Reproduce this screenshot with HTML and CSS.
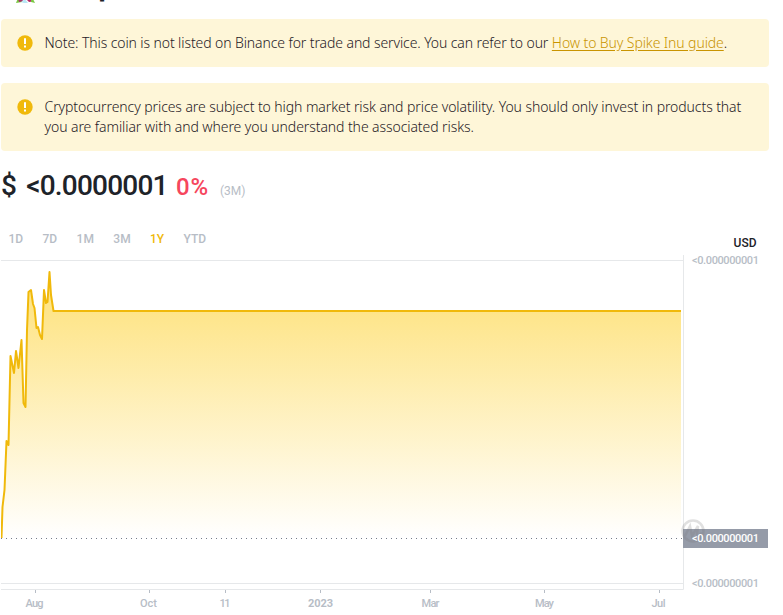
FILE: index.html
```html
<!DOCTYPE html>
<html lang="en">
<head>
<meta charset="utf-8">
<title>Spike Inu price</title>
<link rel="stylesheet" href="styles.css">
</head>
<body>
<main class="page">
  <header class="coin">
    <svg class="coin-logo" width="20" height="24" viewBox="0 0 20 24">
      <path d="M0 24L2 19H6V23Z" fill="#79c843"/>
      <path d="M2 20H8L6 22.500L3 23Z" fill="#a83268"/>
      <path d="M5 23L9 20L12 24H8Z" fill="#b9e6f5"/>
      <path d="M10 20H16L17 22.500L13 23Z" fill="#b52c69"/>
      <path d="M15 20H17L19 24L15 23Z" fill="#79c843"/>
    </svg>
    <h1 class="coin-name">Spike Inu</h1>
  </header>
  <section class="notice">
    <svg class="notice-icon" width="16" height="16" viewBox="0 0 16 16"><circle cx="8" cy="8" r="7.7" fill="#f0b90b"/><path d="M7 3.2H9V9H7ZM7 10.5H9V12.5H7Z" fill="#fff"/></svg>
    <p class="notice-text"><span class="listing">Note: This coin is not listed on Binance for trade and service. You can refer to our <a class="guide" href="#">How to Buy Spike Inu guide</a>.</span></p>
  </section>
  <section class="notice">
    <svg class="notice-icon" width="16" height="16" viewBox="0 0 16 16"><circle cx="8" cy="8" r="7.7" fill="#f0b90b"/><path d="M7 3.2H9V9H7ZM7 10.5H9V12.5H7Z" fill="#fff"/></svg>
    <p class="notice-text">Cryptocurrency prices are subject to high market risk and price volatility. You should only invest in products that<br>you are familiar with and where you understand the associated risks.</p>
  </section>
  <div class="quote">
    <span class="price">$ &lt;0.0000001</span>
    <span class="change">0%</span>
    <span class="period">(3M)</span>
  </div>
  <div class="toolbar">
    <nav class="ranges">
      <span>1D</span><span>7D</span><span>1M</span><span>3M</span><span class="active">1Y</span><span>YTD</span>
    </nav>
    <span class="currency">USD</span>
  </div>
  <svg class="chart" width="782" height="361" viewBox="1 254 782 361">
    <defs><linearGradient id="area" x1="0" y1="311" x2="0" y2="538" gradientUnits="userSpaceOnUse"><stop offset="0" stop-color="#fee58a"/><stop offset="1" stop-color="#fff"/></linearGradient></defs>
    <path class="grid" d="M1 260.5H683M1 583.5H683M1 589.5H683.5V255"/>
    <path fill="url(#area)" d="M1 538L2.500 507L4.500 490L6.500 441L8.500 445L10.500 356L14 373L16 351L18.500 368L21.500 340L23.500 403L25.500 407L27 330L28.500 292L31 290L33 304L34.500 308L36.500 328L38 327L40 335L42 339L44 290L46 303L47.500 302L49.500 272L51 295L53.500 311H681V538Z"/>
    <path class="line" d="M1.500 538L2.500 507L4.500 490L6.500 441L8.500 445L10.500 356L14 373L16 351L18.500 368L21.500 340L23.500 403L25.500 407L27 330L28.500 292L31 290L33 304L34.500 308L36.500 328L38 327L40 335L42 339L44 290L46 303L47.500 302L49.500 272L51 295L53.500 311H681"/>
    <path class="baseline" d="M1 538.5H683"/>
    <path class="ticks" d="M35.500 590V593M149.500 590V593M225.500 590V593M320.500 590V593M430.500 590V593M544.500 590V593M659.500 590V593"/>
    <rect x="683" y="529" width="85" height="19" fill="#959ba8"/>
    <g class="mark"><circle cx="693" cy="531" r="10.500"/><path d="M685 536L690 526L692 536L698 526L697 534Q698 537 702 533"/></g>
    <g class="scale">
      <text x="692" y="264" textLength="67">&lt;0.000000001</text>
      <text class="current" x="692" y="542" textLength="67">&lt;0.000000001</text>
      <text x="692" y="587" textLength="67">&lt;0.000000001</text>
    </g>
    <g class="dates">
      <text x="34.500" y="607" textLength="18">Aug</text>
      <text x="148.500" y="607" textLength="17">Oct</text>
      <text x="225" y="607" textLength="11">11</text>
      <text class="year" x="320.500" y="607" textLength="25">2023</text>
      <text x="430.500" y="607" textLength="18">Mar</text>
      <text x="544.500" y="607" textLength="19">May</text>
      <text x="658.500" y="607" textLength="14">Jul</text>
    </g>
  </svg>
</main>
</body>
</html>
```
FILE: styles.css
```css
* { box-sizing: border-box; }
body { margin: 0; background: #fff; color: #1e2329; font-family: Roboto, "Liberation Sans", sans-serif; overflow: hidden; }
h1, p { margin: 0; }
.page { width: 783px; height: 615px; padding-left: 1px; overflow: hidden; }
.coin { height: 19px; display: flex; align-items: flex-start; gap: 8px; padding-left: 15px; overflow: hidden; }
.coin-logo { flex: none; margin-top: -21px; }
.coin-name { font: 700 28px/32px Inter, sans-serif; margin-top: -30px; margin-left: 36px; white-space: nowrap; }
.notice { width: 768px; display: flex; gap: 12px; padding: 14px 16px; margin-bottom: 16px; background: #fef6d8; border-radius: 4px; }
.notice-icon { flex: none; margin-top: 2px; }
.notice-text { font: 350 14px/20px "Noto Sans", sans-serif; letter-spacing: -.08px; white-space: nowrap; color: #1e2026; position: relative; left: -.5px; }
.listing { letter-spacing: -.1px; }
.guide { color: #c99400; text-decoration: underline; text-underline-offset: 2px; }
.quote { height: 36px; padding-top: 1px; display: flex; align-items: baseline; line-height: 36px; white-space: nowrap; }
.price { font-size: 28px; font-weight: 500; width: 175px; letter-spacing: -.8px; word-spacing: 4px; }
.change { font-size: 24px; font-weight: 500; color: #f6465d; width: 44px; letter-spacing: .8px; }
.period { font-size: 12px; color: #b7bdc6; }
.toolbar { width: 768px; height: 51px; display: flex; justify-content: space-between; }
.ranges { display: flex; gap: 19.4px; padding: 28px 0 0 7.5px; font-size: 12px; line-height: 16px; color: #b7bdc6; font-weight: 500; }
.active { color: #f0b90b; }
.currency { margin: 32px 12.5px 0 0; font-size: 12px; line-height: 16px; font-weight: 500; }
.chart { display: block; }
.grid { fill: none; stroke: #e6e8ea; }
.line { fill: none; stroke: #f0b90b; stroke-width: 2; stroke-linejoin: round; }
.baseline { stroke: #777d89; stroke-dasharray: 1 4; }
.ticks { stroke: #b7bdc6; }
.mark { fill: none; stroke: #777; stroke-width: 2.5; opacity: .22; }
.scale, .dates { font-size: 11px; font-weight: 500; fill: #b7bdc6; }
.scale .current { fill: #fff; }
.dates { text-anchor: middle; }
.dates .year { font-weight: 700; }
```
